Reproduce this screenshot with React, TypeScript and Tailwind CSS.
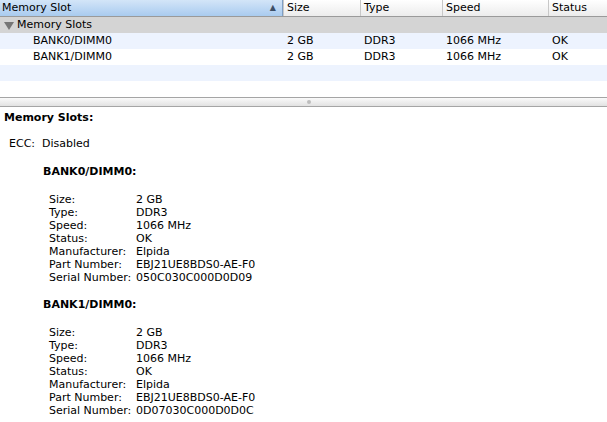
import React from "react";

const cols = [
  { label: "Size", w: "w-[77px]" },
  { label: "Type", w: "w-[82px]" },
  { label: "Speed", w: "w-[106px]" },
  { label: "Status", w: "flex-1" },
];

const slots = [
  {
    name: "BANK0/DIMM0",
    serial: "050C030C000D0D09",
  },
  {
    name: "BANK1/DIMM0",
    serial: "0D07030C000D0D0C",
  },
];

function Details({ serial }: { serial: string }) {
  const rows: [string, string][] = [
    ["Size:", "2 GB"],
    ["Type:", "DDR3"],
    ["Speed:", "1066 MHz"],
    ["Status:", "OK"],
    ["Manufacturer:", "Elpida"],
    ["Part Number:", "EBJ21UE8BDS0-AE-F0"],
    ["Serial Number:", serial],
  ];
  return (
    <div className="pl-[49px]">
      {rows.map(([k, v]) => (
        <div key={k} className="flex h-[13px] leading-[13px]">
          <span className="w-[87px]">{k}</span>
          <span>{v}</span>
        </div>
      ))}
    </div>
  );
}

export default function App() {
  return (
    <div className="w-[607px] h-[422px] bg-white overflow-hidden text-[11px] text-black font-['DejaVu_Sans',sans-serif]">
      {/* Table */}
      <div className="h-[97px] flex flex-col">
        <div className="flex h-[17px] border-b border-[#9a9a9a] leading-[16px]">
          <div className="w-[283px] flex items-center justify-between pl-[2px] pr-[6px] bg-gradient-to-b from-[#d3e5f8] to-[#a9cbef] border-r border-[#7f9fc4]">
            <span>Memory Slot</span>
            <span className="text-[8px] text-[#3d4f66]">▲</span>
          </div>
          {cols.map((c) => (
            <div key={c.label} className={`${c.w} pl-[3px] bg-gradient-to-b from-white to-[#ececec] border-l border-[#c8c8c8]`}>
              {c.label}
            </div>
          ))}
        </div>
        <div className="flex items-center h-[16px] bg-[#d4d4d4] pl-[4px]">
          <svg width="10" height="9" viewBox="0 0 10 9" className="mr-[3px]">
            <path d="M0 1h10L5 9z" fill="#757575" />
          </svg>
          <span>Memory Slots</span>
        </div>
        {[0, 1, 2, 3].map((i) => {
          const s = slots[i];
          return (
            <div key={i} className={`flex h-[16px] leading-[16px] ${i % 2 === 0 ? "bg-[#edf3fe]" : "bg-white"}`}>
              {s && (
                <>
                  <div className="w-[283px] pl-[33px]">{s.name}</div>
                  <div className="w-[77px] pl-[4px]">2 GB</div>
                  <div className="w-[82px] pl-[4px]">DDR3</div>
                  <div className="w-[106px] pl-[4px]">1066 MHz</div>
                  <div className="flex-1 pl-[4px]">OK</div>
                </>
              )}
            </div>
          );
        })}
        <div className="flex-1 bg-white" />
      </div>

      {/* Splitter */}
      <div className="h-[10px] border-y border-[#a5a5a5] bg-gradient-to-b from-[#fafafa] to-[#e2e2e2] flex items-center justify-center">
        <div className="w-[4px] h-[4px] rounded-full bg-[#bdbdbd] ml-[10px]" />
      </div>

      {/* Details */}
      <div className="pt-[4px]">
        <div className="pl-[4px] font-bold h-[14px] leading-[14px]">Memory Slots:</div>
        <div className="pl-[9px] mt-[12px] h-[14px] leading-[14px]">ECC:&nbsp;&nbsp;Disabled</div>
        {slots.map((s) => (
          <div key={s.name}>
            <div className="pl-[43px] mt-[14px] font-bold h-[14px] leading-[14px]">{s.name}:</div>
            <div className="mt-[14px]">
              <Details serial={s.serial} />
            </div>
          </div>
        ))}
      </div>
    </div>
  );
}
